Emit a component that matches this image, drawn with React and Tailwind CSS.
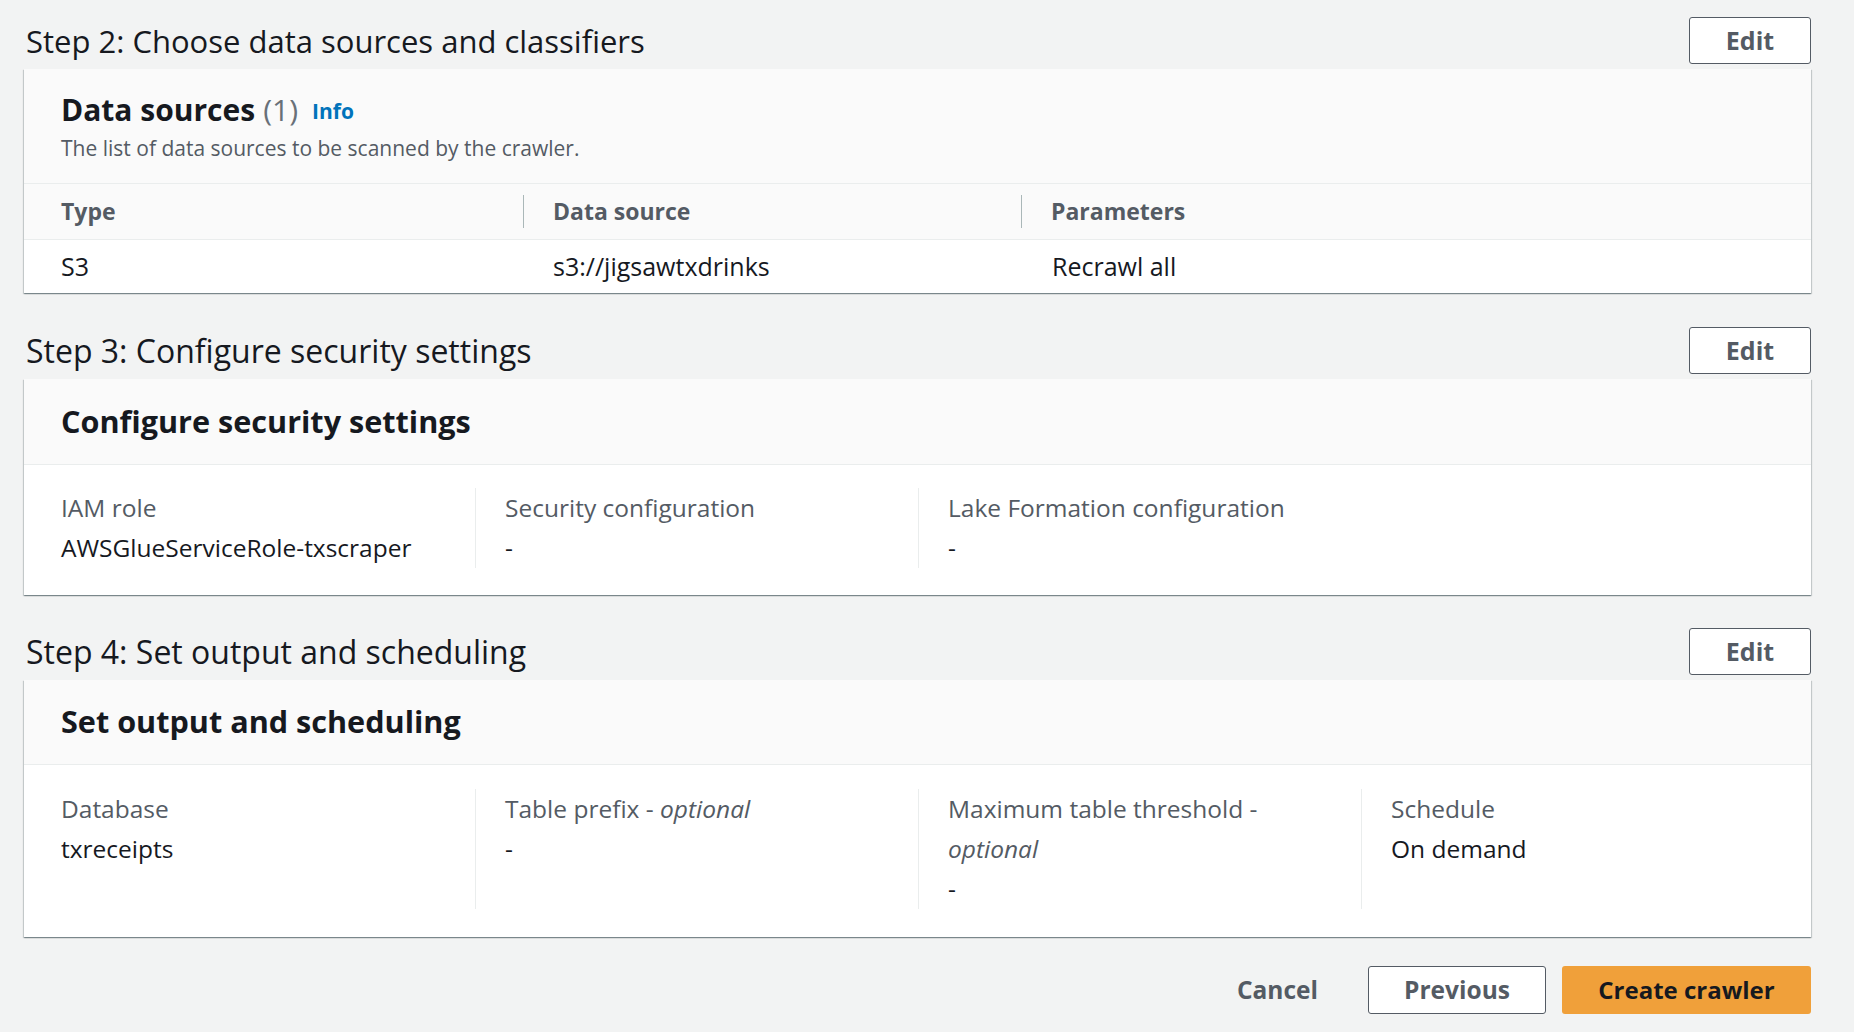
import React from "react";

const font = { fontFamily: '"Open Sans", "Noto Sans", Arial, sans-serif' };

function EditButton() {
  return (
    <button className="h-[47px] w-[122px] shrink-0 rounded-[3px] border border-[#545b64] bg-white text-[25px] font-bold text-[#545b64]">
      Edit
    </button>
  );
}

function StepHeader({ title, size }) {
  return (
    <div className="flex h-[47px] items-center justify-between">
      <h2 className={"pl-[2px] font-normal leading-[40px] text-[#16191f] " + size}>{title}</h2>
      <EditButton />
    </div>
  );
}

const cardCls =
  "mt-[5px] bg-white shadow-[0_1px_1px_0_rgba(0,28,36,0.3),1px_1px_1px_0_rgba(0,28,36,0.15),-1px_1px_1px_0_rgba(0,28,36,0.15)]";

function Field({ label, children, first }) {
  return (
    <div
      className={
        first
          ? "w-[414px] shrink-0 pr-[20px]"
          : "w-[443px] shrink-0 border-l border-[#eaeded] pl-[29px] pr-[20px]"
      }
    >
      {label}
      {children}
    </div>
  );
}

const labelCls = "text-[24.5px] leading-[40px] text-[#545b64]";
const valueCls = "text-[24.5px] leading-[40px] text-[#16191f]";

export default function App() {
  return (
    <div style={font} className="min-h-screen w-full bg-[#f2f3f3] pl-[24px] pr-[43px] pt-[17px]">
      {/* Step 2 */}
      <section>
        <StepHeader size="text-[31px]" title="Step 2: Choose data sources and classifiers" />
        <div className={cardCls + " h-[224px]"}>
          <div className="h-[114px] bg-[#fafafa] px-[37px] pt-[24px]">
            <div className="flex h-[34px] items-center">
              <span className="text-[30px] font-bold leading-[34px] text-[#16191f]">Data sources</span>
              <span className="ml-[8px] text-[30px] leading-[34px] text-[#687078]">(1)</span>
              <span className="ml-[14px] mt-[4px] text-[21px] font-bold text-[#0073bb]">Info</span>
            </div>
            <div className="mt-[7px] text-[21px] leading-[28px] text-[#545b64]">
              The list of data sources to be scanned by the crawler.
            </div>
          </div>
          <div className="flex h-[56px] items-center border-t border-[#eaeded] bg-[#fafafa]">
            <div className="flex h-[33px] w-[500px] shrink-0 items-center border-r border-[#aab7b8] pl-[37px] text-[23px] font-bold text-[#545b64]">
              Type
            </div>
            <div className="flex h-[33px] w-[498px] shrink-0 items-center border-r border-[#aab7b8] pl-[29px] text-[23px] font-bold text-[#545b64]">
              Data source
            </div>
            <div className="flex h-[33px] items-center pl-[29px] text-[23px] font-bold text-[#545b64]">Parameters</div>
          </div>
          <div className="flex h-[54px] items-center border-t border-[#eaeded] text-[25px] text-[#16191f]">
            <div className="w-[500px] shrink-0 pl-[37px]">S3</div>
            <div className="w-[498px] shrink-0 pl-[29px]">s3://jigsawtxdrinks</div>
            <div className="pl-[30px]">Recrawl all</div>
          </div>
        </div>
      </section>

      {/* Step 3 */}
      <section className="mt-[34px]">
        <StepHeader size="text-[32px]" title="Step 3: Configure security settings" />
        <div className={cardCls}>
          <div className="flex h-[86px] items-center border-b border-[#eaeded] bg-[#fafafa] px-[37px]">
            <h3 className="text-[30.6px] font-bold text-[#16191f]">Configure security settings</h3>
          </div>
          <div className="flex px-[37px] pb-[27px] pt-[23px]">
            <Field first label={<div className={labelCls}>IAM role</div>}>
              <div className={valueCls}>AWSGlueServiceRole-txscraper</div>
            </Field>
            <Field label={<div className={labelCls}>Security configuration</div>}>
              <div className={valueCls}>-</div>
            </Field>
            <Field label={<div className={labelCls}>Lake Formation configuration</div>}>
              <div className={valueCls}>-</div>
            </Field>
          </div>
        </div>
      </section>

      {/* Step 4 */}
      <section className="mt-[33px]">
        <StepHeader size="text-[32px]" title="Step 4: Set output and scheduling" />
        <div className={cardCls}>
          <div className="flex h-[85px] items-center border-b border-[#eaeded] bg-[#fafafa] px-[37px]">
            <h3 className="text-[30.6px] font-bold text-[#16191f]">Set output and scheduling</h3>
          </div>
          <div className="flex px-[37px] pb-[28px] pt-[24px]">
            <Field first label={<div className={labelCls}>Database</div>}>
              <div className={valueCls}>txreceipts</div>
            </Field>
            <Field
              label={
                <div className={labelCls}>
                  Table prefix - <i>optional</i>
                </div>
              }
            >
              <div className={valueCls}>-</div>
            </Field>
            <Field
              label={
                <div className={labelCls + " w-[330px]"}>
                  Maximum table threshold - <i>optional</i>
                </div>
              }
            >
              <div className={valueCls}>-</div>
            </Field>
            <Field label={<div className={labelCls}>Schedule</div>}>
              <div className={valueCls}>On demand</div>
            </Field>
          </div>
        </div>
      </section>

      {/* Footer buttons */}
      <div className="mt-[29px] flex justify-end gap-[16px]">
        <button className="h-[48px] px-[34px] text-[24.5px] font-bold text-[#545b64]">Cancel</button>
        <button className="h-[48px] w-[178px] rounded-[3px] border border-[#545b64] bg-white text-[24.5px] font-bold text-[#545b64]">
          Previous
        </button>
        <button className="h-[48px] w-[249px] rounded-[3px] bg-[#f0a03a] text-[24px] font-bold text-[#16191f]">
          Create crawler
        </button>
      </div>
    </div>
  );
}
